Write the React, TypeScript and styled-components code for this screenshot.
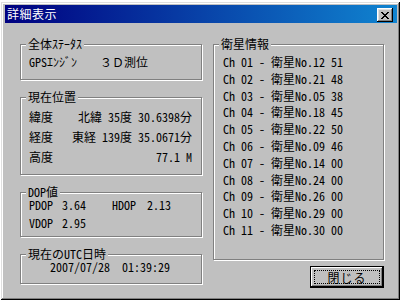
import React from "react";
import styled, { createGlobalStyle } from "styled-components";

const FONT = `"Noto Sans Mono CJK JP", "Noto Sans CJK JP", monospace`;

const GlobalStyle = createGlobalStyle`
  html, body {
    margin: 0;
    padding: 0;
    background: #ffffff;
  }

  body {
    font-family: ${FONT};
    font-size: 12px;
    color: #000000;
  }
`;

const satellites = [
  ["01", "12", "51"],
  ["02", "21", "48"],
  ["03", "05", "38"],
  ["04", "18", "45"],
  ["05", "22", "50"],
  ["06", "09", "46"],
  ["07", "14", "00"],
  ["08", "24", "00"],
  ["09", "26", "00"],
  ["10", "29", "00"],
  ["11", "30", "00"],
];

function App() {
  return (
    <>
      <GlobalStyle />
      <StyledWindow>
        <StyledTitleBar>
          <StyledTitle>詳細表示</StyledTitle>
          <StyledCloseBox aria-label="close">
            <svg width="8" height="7" viewBox="0 0 8 7" shapeRendering="crispEdges">
              <path
                d="M0 0h2v1h-2zM6 0h2v1h-2zM1 1h2v1h-2zM5 1h2v1h-2zM2 2h4v1h-4zM3 3h2v1h-2zM2 4h4v1h-4zM1 5h2v1h-2zM5 5h2v1h-2zM0 6h2v1h-2zM6 6h2v1h-2z"
                fill="#000"
              />
            </svg>
          </StyledCloseBox>
        </StyledTitleBar>

        <StyledBody>
          <StyledColumn>
            <StyledGroup $pt={9} $pb={9}>
              <StyledLegend>全体ｽﾃｰﾀｽ</StyledLegend>
              <StyledRow $h={16}>
                <StyledKey $w={71}>GPSｴﾝｼﾞﾝ</StyledKey>
                <span>３Ｄ測位</span>
              </StyledRow>
            </StyledGroup>

            <StyledGroup $pt={9} $pb={7}>
              <StyledLegend>現在位置</StyledLegend>
              <StyledRow $h={20}>
                <StyledKey>緯度</StyledKey>
                <StyledValue>北緯 35度 30.6398分</StyledValue>
              </StyledRow>
              <StyledRow $h={20}>
                <StyledKey>経度</StyledKey>
                <StyledValue>東経 139度 35.0671分</StyledValue>
              </StyledRow>
              <StyledRow $h={20}>
                <StyledKey>高度</StyledKey>
                <StyledValue>77.1 M</StyledValue>
              </StyledRow>
            </StyledGroup>

            <StyledGroup $pt={3} $pb={4}>
              <StyledLegend>DOP値</StyledLegend>
              <StyledRow $h={18}>
                <StyledKey $w={33}>PDOP</StyledKey>
                <StyledKey $w={50}>3.64</StyledKey>
                <StyledKey $w={35}>HDOP</StyledKey>
                <span>2.13</span>
              </StyledRow>
              <StyledRow $h={18}>
                <StyledKey $w={33}>VDOP</StyledKey>
                <span>2.95</span>
              </StyledRow>
            </StyledGroup>

            <StyledGroup $pt={4} $pb={8}>
              <StyledLegend>現在のUTC日時</StyledLegend>
              <StyledRow $h={16} $indent={21}>
                2007/07/28&nbsp;&nbsp;01:39:29
              </StyledRow>
            </StyledGroup>
          </StyledColumn>

          <StyledSide>
            <StyledGroup $pt={9} $pb={0} $grow>
              <StyledLegend>衛星情報</StyledLegend>
              {satellites.map(([ch, no, snr]) => (
                <StyledSatRow key={ch}>
                  Ch {ch} - 衛星No.{no} {snr}
                </StyledSatRow>
              ))}
            </StyledGroup>
            <StyledFooter>
              <StyledButton type="button">
                <StyledFocus>閉じる</StyledFocus>
              </StyledButton>
            </StyledFooter>
          </StyledSide>
        </StyledBody>
      </StyledWindow>
    </>
  );
}

export default App;

const StyledWindow = styled.div`
  box-sizing: border-box;
  width: 399px;
  height: 298px;
  margin: 2px 0 0 1px;
  padding: 3px 3px 3px 4px;

  display: flex;
  flex-direction: column;

  background: #c0c0c0;
  box-shadow: inset -1px -1px 0 #000000, inset 1px 1px 0 #dfdfdf,
    inset -2px -2px 0 #808080, inset 2px 2px 0 #ffffff;
`;

const StyledTitleBar = styled.div`
  height: 18px;
  flex-shrink: 0;

  display: flex;
  align-items: center;
  justify-content: space-between;

  padding: 0 4px 0 2px;

  background: linear-gradient(to right, #000080, #1084d0);
`;

const StyledTitle = styled.span`
  color: #ffffff;
  font-size: 12px;
  line-height: 18px;
  letter-spacing: 0.5px;
`;

const StyledCloseBox = styled.span`
  box-sizing: border-box;
  width: 16px;
  height: 14px;
  margin-top: 2px;

  display: flex;
  align-items: center;
  justify-content: center;

  background: #c0c0c0;
  box-shadow: inset -1px -1px 0 #000000, inset 1px 1px 0 #ffffff,
    inset -2px -2px 0 #808080, inset 2px 2px 0 #dfdfdf;
`;

const StyledBody = styled.div`
  flex: 1;

  display: flex;
  gap: 11px;

  padding: 21px 0 0 15px;
`;

const StyledColumn = styled.div`
  width: 182px;

  display: flex;
  flex-direction: column;
  gap: 17px;
`;

const StyledSide = styled.div`
  width: 171px;

  display: flex;
  flex-direction: column;
`;

const StyledGroup = styled.div<{ $pt: number; $pb: number; $grow?: boolean }>`
  position: relative;
  box-sizing: border-box;

  height: ${({ $grow }) => ($grow ? "216px" : "auto")};
  padding: ${({ $pt, $pb }) => `${$pt}px 9px ${$pb}px 8px`};

  border: 1px solid #808080;
  box-shadow: inset 1px 1px 0 #ffffff, 1px 1px 0 #ffffff;
`;

const StyledLegend = styled.span`
  position: absolute;
  top: -7px;
  left: 5px;

  padding: 0 2px;

  line-height: 12px;
  background: #c0c0c0;
`;

const StyledRow = styled.div<{ $h: number; $indent?: number }>`
  height: ${({ $h }) => $h}px;

  display: flex;
  align-items: center;

  padding-left: ${({ $indent }) => $indent ?? 0}px;
  line-height: 12px;
  white-space: pre;
`;

const StyledKey = styled.span<{ $w?: number }>`
  width: ${({ $w }) => ($w ? `${$w}px` : "auto")};
  flex-shrink: 0;
`;

const StyledValue = styled.span`
  margin-left: auto;
`;

const StyledSatRow = styled.div`
  height: 16.8px;
  line-height: 16.8px;
  padding-left: 1px;
  white-space: pre;
`;

const StyledFooter = styled.div`
  display: flex;
  justify-content: flex-end;
  margin-top: 6px;
`;

const StyledButton = styled.button`
  box-sizing: border-box;
  width: 74px;
  height: 22px;
  padding: 4px;

  font-family: ${FONT};
  font-size: 12px;
  color: #000000;

  background: #c0c0c0;
  border: 1px solid #000000;
  box-shadow: inset -1px -1px 0 #000000, inset 1px 1px 0 #ffffff,
    inset -2px -2px 0 #808080;

  cursor: pointer;
`;

const StyledFocus = styled.span`
  display: flex;
  align-items: center;
  justify-content: center;

  height: 100%;
  outline: 1px dotted #000000;
  letter-spacing: 1px;
`;
